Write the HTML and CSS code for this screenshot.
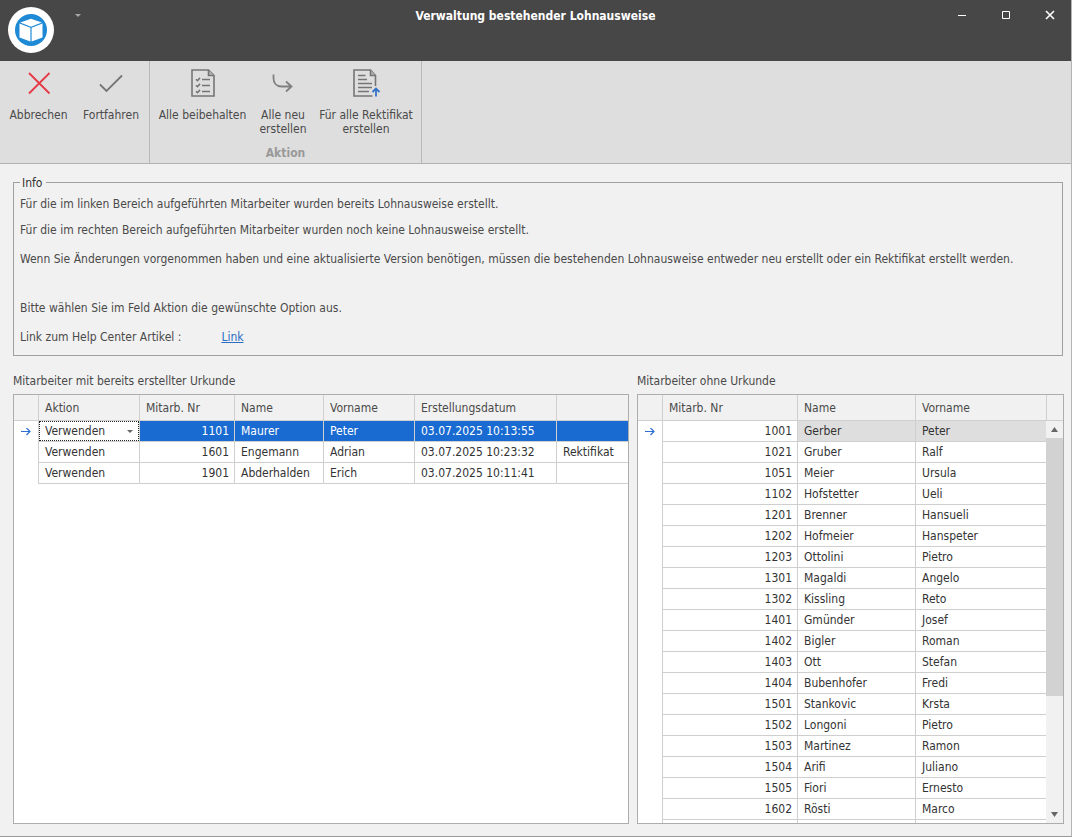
FILE: index.html
```html
<!DOCTYPE html>
<html lang="de">
<head>
<meta charset="utf-8">
<title>Verwaltung bestehender Lohnausweise</title>
<link rel="stylesheet" href="styles.css">
</head>
<body>
<div class="window">
  <header class="titlebar">
    <div class="title-left">
      <svg class="logo" width="46" height="46" viewBox="0 0 46 46" aria-hidden="true">
        <circle cx="23" cy="23" r="23" fill="#fff"/>
        <circle cx="23" cy="23" r="16" fill="#1e8ad6"/>
        <path fill="#fff" d="M23 11.800 33.800 15.600 23 19.800 12.200 15.600ZM11.500 16.600 22.400 20.800V34.400L11.500 30.400ZM34.500 16.600 23.600 20.800V34.400L34.500 30.400Z"/>
      </svg>
      <button class="quick" aria-label="Schnellzugriff anpassen"><svg width="6" height="3" viewBox="0 0 6 3"><path fill="#a8a8a8" d="M0 0H6L3 3Z"/></svg></button>
    </div>
    <h1 class="title">Verwaltung bestehender Lohnausweise</h1>
    <div class="window-buttons">
      <button aria-label="Minimieren"><svg width="10" height="10" viewBox="0 0 10 10"><path stroke="#fff" d="M1 5.500H9"/></svg></button>
      <button aria-label="Maximieren"><svg width="10" height="10" viewBox="0 0 10 10"><path stroke="#fff" fill="none" d="M1.500 1.500H8.500V8.500H1.500Z"/></svg></button>
      <button aria-label="Schliessen"><svg width="10" height="10" viewBox="0 0 10 10"><path stroke="#fff" stroke-width="1.600" d="M1 1 9 9M9 1 1 9"/></svg></button>
    </div>
  </header>

  <div class="ribbon" role="toolbar">
    <section class="group">
      <div class="commands">
        <button class="command cancel"><svg width="32" height="32" viewBox="0 0 32 32"><path fill="none" stroke="#e63946" stroke-width="1.800" d="M6 6 26.500 26.500M26.500 6 6 26.500"/></svg><span>Abbrechen</span></button>
        <button class="command proceed"><svg width="32" height="32" viewBox="0 0 32 32"><path fill="none" stroke="#757575" stroke-width="1.800" d="M5 17.500 11.500 24 27 8.500"/></svg><span>Fortfahren</span></button>
      </div>
    </section>
    <section class="group">
      <div class="commands">
        <button class="command keep"><svg width="32" height="32" viewBox="0 0 32 32" fill="none" stroke="#757575" stroke-width="1.600"><path d="M5 3H21.500L27 8.500V29H5Z"/><path fill="#b5b5b5" d="M21.500 3V8.500H27"/><path d="M9 12.200 10.500 13.700 13 10.900M9 18.200 10.500 19.700 13 16.900M9 24.200 10.500 25.700 13 22.900M15 12.500H23M15 18.500H23M15 24.500H23"/></svg><span>Alle beibehalten</span></button>
        <button class="command renew"><svg width="32" height="32" viewBox="0 0 32 32"><path fill="none" stroke="#808080" stroke-width="1.800" d="M6.500 7.500V11C6.500 16 9.500 19.500 14.500 19.500H24.500M19 14.500 24.500 19.500 19 24.500"/></svg><span>Alle neu<br>erstellen</span></button>
        <button class="command amend"><svg width="32" height="32" viewBox="0 0 32 32" fill="none" stroke="#757575" stroke-width="1.600"><path d="M22.500 29H4V3H20.500L25.500 8.500V19"/><path fill="#b5b5b5" d="M20.500 3V8.500H25.500"/><path d="M8 8.500H15.500M8 12.500H17M8 16.500H22M8 20.500H22M8 24.500H19"/><path stroke="#3573c9" stroke-width="1.800" d="M26 29.500V22M22.500 25 26 21.500 29.500 25"/></svg><span>Für alle Rektifikat<br>erstellen</span></button>
      </div>
      <h2 class="group-name">Aktion</h2>
    </section>
  </div>

  <main class="content">
    <fieldset class="info">
      <legend>Info</legend>
      <p>Für die im linken Bereich aufgeführten Mitarbeiter wurden bereits Lohnausweise erstellt.</p>
      <p>Für die im rechten Bereich aufgeführten Mitarbeiter wurden noch keine Lohnausweise erstellt.</p>
      <p class="wide">Wenn Sie Änderungen vorgenommen haben und eine aktualisierte Version benötigen, müssen die bestehenden Lohnausweise entweder neu erstellt oder ein Rektifikat erstellt werden.</p>
      <p class="choose">Bitte wählen Sie im Feld Aktion die gewünschte Option aus.</p>
      <p class="wide help"><span>Link zum Help Center Artikel :</span><a href="#">Link</a></p>
    </fieldset>

    <div class="panels">
      <section class="panel left">
        <h2 class="caption" id="cap-left">Mitarbeiter mit bereits erstellter Urkunde</h2>
        <div class="grid">
          <table aria-labelledby="cap-left">
            <colgroup><col class="c-mark"><col class="c-action"><col class="c-no"><col class="c-name"><col class="c-first"><col class="c-date"><col></colgroup>
            <thead><tr><th></th><th>Aktion</th><th>Mitarb. Nr</th><th>Name</th><th>Vorname</th><th>Erstellungsdatum</th><th></th></tr></thead>
            <tbody>
              <tr class="selected"><td class="mark"><svg width="10" height="8" viewBox="0 0 10 8"><path fill="none" stroke="#2d6fd0" stroke-width="1.200" d="M0 3.500H9M5.500 0 9 3.500 5.500 7"/></svg></td><td class="edit"><div class="combo"><select aria-label="Aktion"><option>Verwenden</option></select><svg width="6" height="3" viewBox="0 0 6 3"><path fill="#666" d="M0 0H6L3 3Z"/></svg></div></td><td class="num">1101</td><td>Maurer</td><td>Peter</td><td>03.07.2025 10:13:55</td><td></td></tr>
              <tr><td class="mark"></td><td>Verwenden</td><td class="num">1601</td><td>Engemann</td><td>Adrian</td><td>03.07.2025 10:23:32</td><td>Rektifikat</td></tr>
              <tr><td class="mark"></td><td>Verwenden</td><td class="num">1901</td><td>Abderhalden</td><td>Erich</td><td>03.07.2025 10:11:41</td><td></td></tr>
            </tbody>
          </table>
        </div>
      </section>

      <section class="panel right">
        <h2 class="caption" id="cap-right">Mitarbeiter ohne Urkunde</h2>
        <div class="grid">
          <table aria-labelledby="cap-right">
            <colgroup><col class="c-mark"><col class="c-no-wide"><col class="c-name-wide"><col></colgroup>
            <thead><tr><th></th><th>Mitarb. Nr</th><th>Name</th><th>Vorname</th></tr></thead>
            <tbody>
              <tr class="current"><td class="mark"><svg width="10" height="8" viewBox="0 0 10 8"><path fill="none" stroke="#2d6fd0" stroke-width="1.200" d="M0 3.500H9M5.500 0 9 3.500 5.500 7"/></svg></td><td class="num">1001</td><td>Gerber</td><td>Peter</td></tr>
              <tr><td class="mark"></td><td class="num">1021</td><td>Gruber</td><td>Ralf</td></tr>
              <tr><td class="mark"></td><td class="num">1051</td><td>Meier</td><td>Ursula</td></tr>
              <tr><td class="mark"></td><td class="num">1102</td><td>Hofstetter</td><td>Ueli</td></tr>
              <tr><td class="mark"></td><td class="num">1201</td><td>Brenner</td><td>Hansueli</td></tr>
              <tr><td class="mark"></td><td class="num">1202</td><td>Hofmeier</td><td>Hanspeter</td></tr>
              <tr><td class="mark"></td><td class="num">1203</td><td>Ottolini</td><td>Pietro</td></tr>
              <tr><td class="mark"></td><td class="num">1301</td><td>Magaldi</td><td>Angelo</td></tr>
              <tr><td class="mark"></td><td class="num">1302</td><td>Kissling</td><td>Reto</td></tr>
              <tr><td class="mark"></td><td class="num">1401</td><td>Gmünder</td><td>Josef</td></tr>
              <tr><td class="mark"></td><td class="num">1402</td><td>Bigler</td><td>Roman</td></tr>
              <tr><td class="mark"></td><td class="num">1403</td><td>Ott</td><td>Stefan</td></tr>
              <tr><td class="mark"></td><td class="num">1404</td><td>Bubenhofer</td><td>Fredi</td></tr>
              <tr><td class="mark"></td><td class="num">1501</td><td>Stankovic</td><td>Krsta</td></tr>
              <tr><td class="mark"></td><td class="num">1502</td><td>Longoni</td><td>Pietro</td></tr>
              <tr><td class="mark"></td><td class="num">1503</td><td>Martinez</td><td>Ramon</td></tr>
              <tr><td class="mark"></td><td class="num">1504</td><td>Arifi</td><td>Juliano</td></tr>
              <tr><td class="mark"></td><td class="num">1505</td><td>Fiori</td><td>Ernesto</td></tr>
              <tr><td class="mark"></td><td class="num">1602</td><td>Rösti</td><td>Marco</td></tr>
              <tr><td class="mark"></td><td></td><td></td><td></td></tr>
            </tbody>
          </table>
          <div class="scroll">
            <div class="scroll-cap"></div>
            <button aria-label="Nach oben"><svg width="7" height="5" viewBox="0 0 7 5"><path fill="#666" d="M0 5H7L3.500 0Z"/></svg></button>
            <div class="track"><div class="thumb"></div></div>
            <button aria-label="Nach unten"><svg width="7" height="5" viewBox="0 0 7 5"><path fill="#666" d="M0 0H7L3.500 5Z"/></svg></button>
          </div>
        </div>
      </section>
    </div>
  </main>
</div>
</body>
</html>
```
FILE: styles.css
```css
* { box-sizing: border-box; }

body {
  margin: 0;
  font: 12px/14px Tahoma, "DejaVu Sans Condensed", "Noto Sans", sans-serif;
  color: #4a4a4a;
}

h1, h2, p { margin: 0; font: inherit; }

button {
  border: 0;
  padding: 0;
  background: none;
  font: inherit;
  color: inherit;
}

svg { display: block; }

.window {
  display: flex;
  flex-direction: column;
  height: 100vh;
  background: #f1f1f1;
  border-right: 1px solid #b4b4b4;
  border-bottom: 1px solid #999;
}

/* Title bar */
.titlebar {
  display: grid;
  grid-template-columns: 1fr auto 1fr;
  flex: none;
  height: 61px;
  background: #474747;
}
.title-left {
  display: flex;
  align-items: flex-start;
  gap: 21px;
  padding: 7px 0 0 8px;
}
.quick { padding-top: 7px; }
.title {
  padding-top: 9px;
  color: #fff;
  font-weight: bold;
}
.window-buttons {
  display: flex;
  justify-content: flex-end;
  align-items: flex-start;
  gap: 2px;
}
.window-buttons button {
  display: flex;
  justify-content: center;
  align-items: center;
  width: 42px;
  height: 30px;
}

/* Ribbon */
.ribbon {
  display: flex;
  flex: none;
  height: 103px;
  background: #dedede;
  border-bottom: 1px solid #b2b2b2;
}
.group {
  display: flex;
  flex-direction: column;
  justify-content: space-between;
  padding: 6px 2px 3px;
  border-right: 1px solid #b8b8b8;
}
.commands { display: flex; }
.command {
  display: flex;
  flex-direction: column;
  align-items: center;
  gap: 9px;
  padding: 0 4px;
  white-space: nowrap;
}
.cancel { min-width: 73px; }
.proceed { min-width: 72px; }
.keep { min-width: 101px; }
.renew { min-width: 60px; }
.amend { min-width: 106px; }
.group-name {
  text-align: center;
  font-weight: bold;
  color: #999;
}

/* Content */
.content {
  display: flex;
  flex-direction: column;
  flex: 1;
  min-height: 0;
  padding: 10px 7px 12px 13px;
}
.info {
  margin: 0 1px 0 0;
  padding: 7px 6px 11px;
  border: 1px solid #a0a0a0;
}
.info legend { padding: 2px 4px 0 2px; color: #333; }
.info p + p { margin-top: 12px; }
.info p + .wide { margin-top: 15px; }
.info p + .choose { margin-top: 35px; }
.help { display: flex; gap: 40px; }
.help a { color: #2b6cc4; }

.panels {
  display: flex;
  flex: 1;
  min-height: 0;
  gap: 8px;
  padding-top: 18px;
}
.panel {
  display: flex;
  flex-direction: column;
  min-width: 0;
}
.left { flex: 616 1 0; }
.right { flex: 427 1 0; }
.caption { padding-bottom: 6px; }

.grid {
  display: flex;
  align-items: flex-start;
  flex: 1;
  min-height: 0;
  overflow: hidden;
  background: #fff;
  border: 1px solid #adadad;
}
table {
  flex: 1;
  width: 100%;
  min-width: 0;
  table-layout: fixed;
  border-collapse: separate;
  border-spacing: 0;
}
.c-mark { width: 25px; }
.c-action { width: 101px; }
.c-no { width: 95px; }
.c-name { width: 89px; }
.c-first { width: 91px; }
.c-date { width: 142px; }
.c-no-wide { width: 135px; }
.c-name-wide { width: 118px; }

th, td {
  height: 21px;
  padding: 0 0 0 6px;
  border: 0 solid #cfcfcf;
  border-width: 0 1px 1px 0;
  text-align: left;
  font-weight: normal;
  white-space: nowrap;
  overflow: hidden;
}
th { height: 26px; background: #f1f1f1; }
td { color: #333; }
th:last-child, td:last-child { border-right-width: 0; }
.num { padding: 0 5px 0 0; text-align: right; }
.mark { padding-left: 7px; border-bottom-width: 0; }
.selected td { background: #196bd2; color: #fff; }
.selected .mark, .selected .edit { background: #fff; }
.current td + .num ~ td { background: #dedede; }
.edit { padding: 0; }

.combo {
  display: grid;
  align-items: center;
  height: 20px;
}
.combo > * { grid-area: 1 / 1; }
.combo select {
  width: 100%;
  height: 20px;
  padding: 0 5px;
  appearance: none;
  border: 1px dotted #222;
  border-radius: 0;
  background: #fff;
  font: inherit;
  color: #333;
}
.combo svg {
  justify-self: end;
  margin-right: 6px;
  pointer-events: none;
}

/* Scroll bar */
.scroll {
  display: flex;
  flex-direction: column;
  flex: none;
  align-self: stretch;
  width: 17px;
  background: #f1f1f1;
}
.scroll-cap {
  height: 26px;
  border: 0 solid #cfcfcf;
  border-width: 0 0 1px 1px;
}
.scroll button {
  display: flex;
  justify-content: center;
  align-items: center;
  height: 17px;
}
.track { flex: 1; }
.thumb { height: 70%; background: #d2d2d2; }
```
